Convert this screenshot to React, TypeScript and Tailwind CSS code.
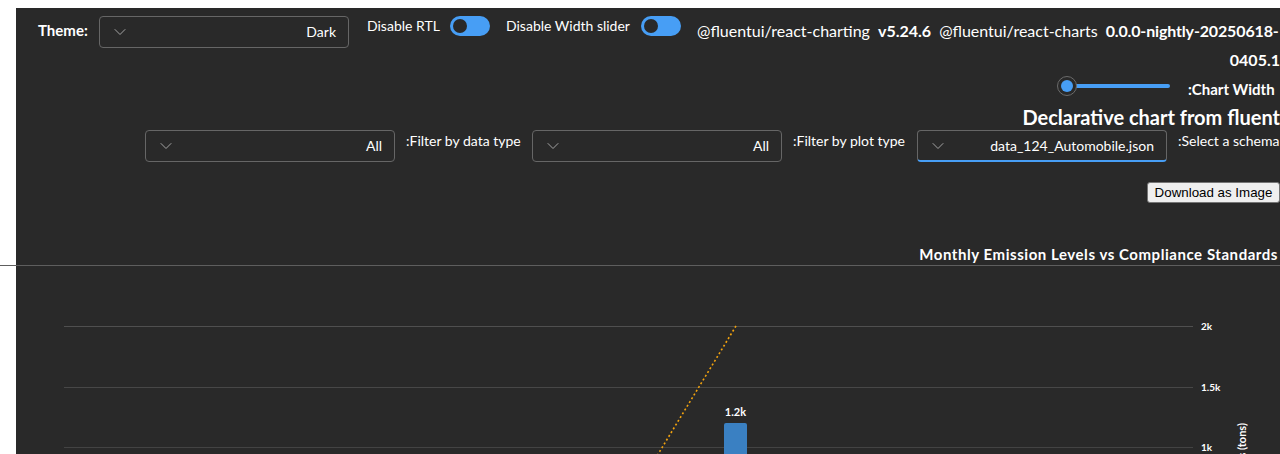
import React from "react";

function Chevron() {
  return (
    <svg width="12" height="12" viewBox="0 0 12 12" fill="none" className="shrink-0">
      <path d="M1 3.5 L6 8.5 L11 3.5" stroke="#a3a3a3" strokeWidth="1" strokeLinecap="round" strokeLinejoin="round" />
    </svg>
  );
}

function Dropdown({ value, focused }: { value: string; focused?: boolean }) {
  return (
    <div
      className={
        focused
          ? "flex h-8 w-[250px] shrink-0 items-center justify-between rounded border border-[#666666] border-b-2 border-b-[#479ef5] bg-[#292929] pl-[14px] pr-3"
          : "flex h-8 w-[250px] shrink-0 items-center justify-between rounded border border-[#666666] bg-[#292929] pl-[14px] pr-3"
      }
    >
      <Chevron />
      <span className="text-[14px] leading-5 text-white whitespace-nowrap">{value}</span>
    </div>
  );
}

function Toggle() {
  return (
    <div className="flex h-5 w-10 shrink-0 items-center rounded-full bg-[#479ef5] pl-[3px]">
      <div className="h-[14px] w-[14px] rounded-full bg-[#292929]" />
    </div>
  );
}

function Slider() {
  return (
    <div className="mt-[2px] mr-[18px] flex w-[113px] items-center">
      <div className="z-10 flex h-5 w-5 shrink-0 items-center justify-center rounded-full border border-[#6b6b6b] bg-[#292929]">
        <div className="h-3 w-3 rounded-full bg-[#479ef5]" />
      </div>
      <div className="-ml-[4px] h-1 flex-1 rounded-full bg-[#479ef5]" />
    </div>
  );
}

function Chart() {
  return (
    <svg width="1264" height="200" className="block">
      <line x1="48" x2="1177" y1="60.5" y2="60.5" stroke="#4f4f4f" strokeWidth="1" />
      <line x1="48" x2="1177" y1="121.5" y2="121.5" stroke="#474747" strokeWidth="1" />
      <line x1="48" x2="1177" y1="181.5" y2="181.5" stroke="#434343" strokeWidth="1" />
      <g fill="#ffffff" fontSize="10" fontWeight="700" dominantBaseline="middle">
        <text x="1185" y="61">2k</text>
        <text x="1185" y="122">1.5k</text>
        <text x="1185" y="182">1k</text>
      </g>
      <rect x="708" y="157" width="23" height="80" rx="2" fill="#3a80c2" />
      <text x="719.5" y="147" fill="#ffffff" fontSize="11" fontWeight="700" textAnchor="middle" dominantBaseline="middle">
        1.2k
      </text>
      <line x1="720" y1="60" x2="630" y2="208" stroke="#f2a30f" strokeWidth="1.6" strokeDasharray="2 2.4" />
      <text
        transform="translate(1230 157) rotate(-90)"
        textAnchor="end"
        fill="#ffffff"
        fontSize="11"
        fontWeight="700"
      >
        Emissions (tons)
      </text>
    </svg>
  );
}

export default function App() {
  return (
    <div className="h-[454px] w-[1280px] overflow-hidden bg-white pl-4 pt-2 font-[Lato,sans-serif]">
      <div className="h-[600px] bg-[#292929] text-white">
        {/* Row 1 */}
        <div className="flex items-start pl-[22px] pt-2">
          <span className="w-[53px] shrink-0 whitespace-nowrap text-[15px] font-bold leading-[28px]">Theme:</span>
          <div className="ml-2">
            <Dropdown value="Dark" />
          </div>
          <span className="ml-[18px] w-[71px] shrink-0 whitespace-nowrap text-[14px] leading-5">Disable RTL</span>
          <div className="ml-3">
            <Toggle />
          </div>
          <span className="ml-4 w-[124px] shrink-0 whitespace-nowrap text-[14px] leading-5">Disable Width slider</span>
          <div className="ml-[11px]">
            <Toggle />
          </div>
          <div className="ml-4 min-w-0 flex-1 text-[16px] leading-[29px]">
            <div className="flex gap-2 whitespace-nowrap">
              <span>@fluentui/react-charting</span>
              <span className="font-bold">v5.24.6</span>
              <span>@fluentui/react-charts</span>
              <span className="font-bold tracking-[-0.15px]">0.0.0-nightly-20250618-</span>
            </div>
            <div className="text-right font-bold">0405.1</div>
          </div>
        </div>

        {/* Row 2 */}
        <div className="flex h-[30px] items-start justify-end">
          <Slider />
          <span className="w-[92px] whitespace-nowrap text-[15px] font-bold leading-[30px]">:Chart Width</span>
        </div>

        {/* Row 3 */}
        <div className="h-[26px] whitespace-nowrap text-right text-[20px] font-bold leading-[26px]">
          Declarative chart from fluent
        </div>

        {/* Row 4 */}
        <div className="flex items-start justify-end gap-[11px]">
          <Dropdown value="All" />
          <span className="w-[115px] whitespace-nowrap pt-[1px] text-[14px] leading-5">:Filter by data type</span>
          <Dropdown value="All" />
          <span className="w-[113px] whitespace-nowrap pt-[1px] text-[14px] leading-5">:Filter by plot type</span>
          <Dropdown value="data_124_Automobile.json" focused />
          <span className="w-[102px] overflow-hidden whitespace-nowrap pt-[1px] text-[14px] leading-5">:Select a schema</span>
        </div>

        {/* Row 5 */}
        <div className="mt-5 flex justify-end">
          <button className="h-[21px] w-[133px] rounded-[3px] border border-[#767676] bg-[#efefef] font-['Liberation_Sans',Arial,sans-serif] text-[13.33px] leading-[19px] text-black">
            Download as Image
          </button>
        </div>

        {/* Row 6 */}
        <div className="mt-[41px] whitespace-nowrap pr-[2px] text-right text-[15px] font-bold leading-[21px] tracking-[0.55px]">
          Monthly Emission Levels vs Compliance Standards
        </div>
        <div className="-ml-4 h-px bg-[#5e5e5e]" />

        <Chart />
      </div>
    </div>
  );
}
